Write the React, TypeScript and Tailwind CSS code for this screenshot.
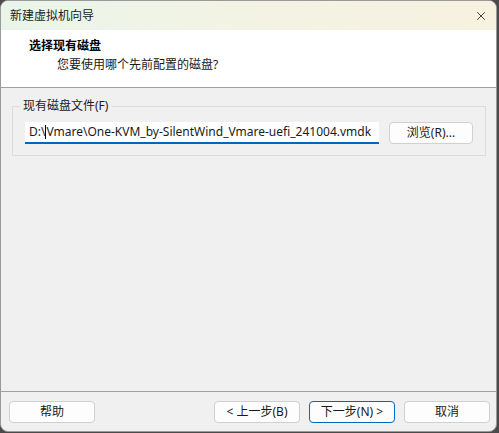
import { X } from 'lucide-react';

const FONT = { fontFamily: '"Noto Sans", "Noto Sans CJK SC", sans-serif' };

function WinButton({ children, primary }: { children: React.ReactNode; primary?: boolean }) {
  return (
    <button
      className={
        primary
          ? 'flex h-[22px] w-[86px] items-center justify-center rounded-[4px] border border-[#0067c0] bg-[#fdfdfd] text-[12px] text-[#1a1a1a]'
          : 'flex h-[22px] w-[86px] items-center justify-center rounded-[4px] border border-[#d0d0d0] bg-[#fdfdfd] text-[12px] text-[#1a1a1a]'
      }
    >
      {children}
    </button>
  );
}

export default function App() {
  return (
    <div className="h-[433px] w-[499px] bg-[#4a4a4a]" style={FONT}>
      <div className="flex h-[432px] w-[497px] flex-col overflow-hidden rounded-[8px] border border-[#9a9a9a] bg-[#f0f0f0]">
        {/* title bar */}
        <div className="flex h-[29px] shrink-0 items-center justify-between bg-gradient-to-r from-[#e9f5ea] via-[#f3f3e3] to-[#f7f1df] pl-[9px] pr-[8px]">
          <span className="text-[12px] text-[#1a1a1a]">新建虚拟机向导</span>
          <X className="h-[14px] w-[14px] text-[#1a1a1a]" strokeWidth={1.4} />
        </div>

        {/* header */}
        <div className="flex h-[58px] shrink-0 flex-col border-b border-[#a0a0a0] bg-white pl-[28px] pt-[7px]">
          <span className="text-[12px] font-bold leading-[18px] text-black">选择现有磁盘</span>
          <span className="pl-[28px] pt-[1px] text-[12px] leading-[18px] text-[#1a1a1a]">您要使用哪个先前配置的磁盘?</span>
        </div>

        {/* body */}
        <div className="flex-1 px-[11px] pt-[10px]">
          <fieldset className="h-[58px] rounded-[1px] border border-[#dcdcdc] px-[12px]">
            <legend className="ml-[-5px] px-[3px] text-[12px] leading-[16px] text-[#1a1a1a]">现有磁盘文件(F)</legend>
            <div className="mt-[8px] flex items-center gap-[10px]">
              <div className="flex h-[22px] w-[354px] items-center border-b-2 border-[#0067c0] bg-white pl-[4px] text-[12px] text-[#1a1a1a]">
                <span>D:\</span>
                <span className="inline-block h-[14px] w-px bg-black" />
                <span>Vmare\One-KVM_by-SilentWind_Vmare-uefi_241004.vmdk</span>
              </div>
              <button className="flex h-[22px] w-[84px] items-center justify-center rounded-[4px] border border-[#d0d0d0] bg-[#fdfdfd] text-[12px] text-[#1a1a1a]">
                浏览(R)...
              </button>
            </div>
          </fieldset>
        </div>

        {/* footer */}
        <div className="flex h-[40px] shrink-0 items-start border-t border-[#a0a0a0] pl-[8px] pr-[6px] pt-[9px]">
          <WinButton>帮助</WinButton>
          <div className="ml-auto flex gap-[9px]">
            <WinButton>&lt; 上一步(B)</WinButton>
            <WinButton primary>下一步(N) &gt;</WinButton>
          </div>
          <div className="ml-[9px]">
            <WinButton>取消</WinButton>
          </div>
        </div>
      </div>
    </div>
  );
}
